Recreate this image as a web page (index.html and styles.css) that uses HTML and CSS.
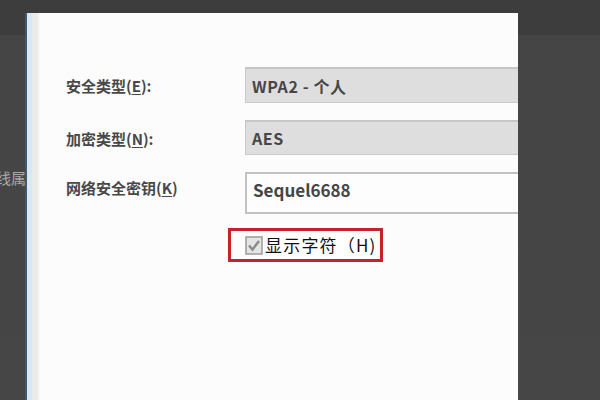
FILE: index.html
```html
<!DOCTYPE html>
<html lang="zh-CN">
<head>
<meta charset="utf-8">
<title>无线网络属性</title>
<link rel="stylesheet" href="styles.css">
</head>
<body>
<div class="desk">
  <div class="side"><span class="side-text">线属</span></div>
  <div class="dialog">
    <div class="form">
      <div class="label">安全类型(<u>E</u>):</div>
      <div class="field field-gray">WPA2 - 个人</div>
      <div class="label">加密类型(<u>N</u>):</div>
      <div class="field field-gray">AES</div>
      <div class="label label-up">网络安全密钥(<u>K</u>)</div>
      <div class="field field-white">Sequel6688</div>
    </div>
    <div class="check-row">
      <div class="highlight">
        <svg class="checkbox" width="18" height="19" viewBox="0 0 18 19">
          <rect x="1" y="1" width="16" height="17" fill="#e4e4e4" stroke="#a0a0a0" stroke-width="1.6"/>
          <path d="M4 9.5 L7.5 13.5 L14 5" fill="none" stroke="#8a8a8a" stroke-width="2.4"/>
        </svg>
        <span class="check-text">显示字符（H)</span>
      </div>
    </div>
  </div>
</div>
</body>
</html>
```
FILE: styles.css
```css
html, body {
  margin: 0;
  padding: 0;
}
body {
  width: 600px;
  height: 400px;
  overflow: hidden;
  font-family: "Noto Sans CJK SC", "Noto Sans", sans-serif;
}
.desk {
  height: 400px;
  box-sizing: border-box;
  padding-top: 13px;
  display: flex;
  background: linear-gradient(#3d3d3d 0, #3d3d3d 35px, #454545 35px, #464646 100%);
}
.side {
  width: 25px;
  flex: none;
  overflow: hidden;
  display: flex;
  justify-content: flex-end;
  align-items: flex-start;
}
.side-text {
  white-space: nowrap;
  margin-top: 155px;
  font-size: 15px;
  line-height: 20px;
  color: #a9a9a9;
  margin-right: -1px;
}
.dialog {
  width: 493px;
  flex: none;
  box-sizing: border-box;
  height: 387px;
  overflow: hidden;
  background: #fcfcfc;
  border-left: 2px solid #3d5a72;
  box-shadow: inset 5px 0 0 #dae8f4, inset 11px 0 0 #ebebea, inset 13px 0 0 #f6f6f6;
  padding: 54px 0 0 39px;
}
.form {
  display: grid;
  grid-template-columns: 179px 300px;
  grid-template-rows: 36px 35px 42px;
  row-gap: 17px;
  align-items: center;
}
.label {
  font-size: 15px;
  font-weight: bold;
  color: #484848;
  white-space: nowrap;
  line-height: 20px;
  padding-top: 2px;
}
.label u {
  text-underline-offset: 2px;
}
.label-up {
  padding-top: 0;
  padding-bottom: 10px;
}
.field {
  height: 100%;
  box-sizing: border-box;
  display: flex;
  align-items: center;
  padding-left: 6px;
  font-size: 16px;
  font-weight: bold;
  color: #464646;
  white-space: nowrap;
  letter-spacing: 0.6px;
}
.field-gray {
  background: #dedede;
  border: 1px solid #c9c9c9;
  border-top: 2px solid #c6c6c6;
}
.field-white {
  background: #fdfdfd;
  border: 2px solid #c2c2c2;
  padding-left: 6px;
  padding-bottom: 8px;
  font-size: 17px;
  letter-spacing: 0;
}
.check-row {
  display: flex;
  padding-left: 162px;
  margin-top: 14px;
}
.highlight {
  width: 155px;
  height: 34px;
  box-sizing: border-box;
  border: 3px solid #c5232b;
  display: flex;
  align-items: center;
  padding-left: 14px;
  gap: 2px;
}
.checkbox {
  display: block;
  flex: none;
}
.check-text {
  background: #ffffff;
  color: #111111;
  font-size: 17px;
  line-height: 26px;
  white-space: nowrap;
  letter-spacing: 1.2px;
}
```
